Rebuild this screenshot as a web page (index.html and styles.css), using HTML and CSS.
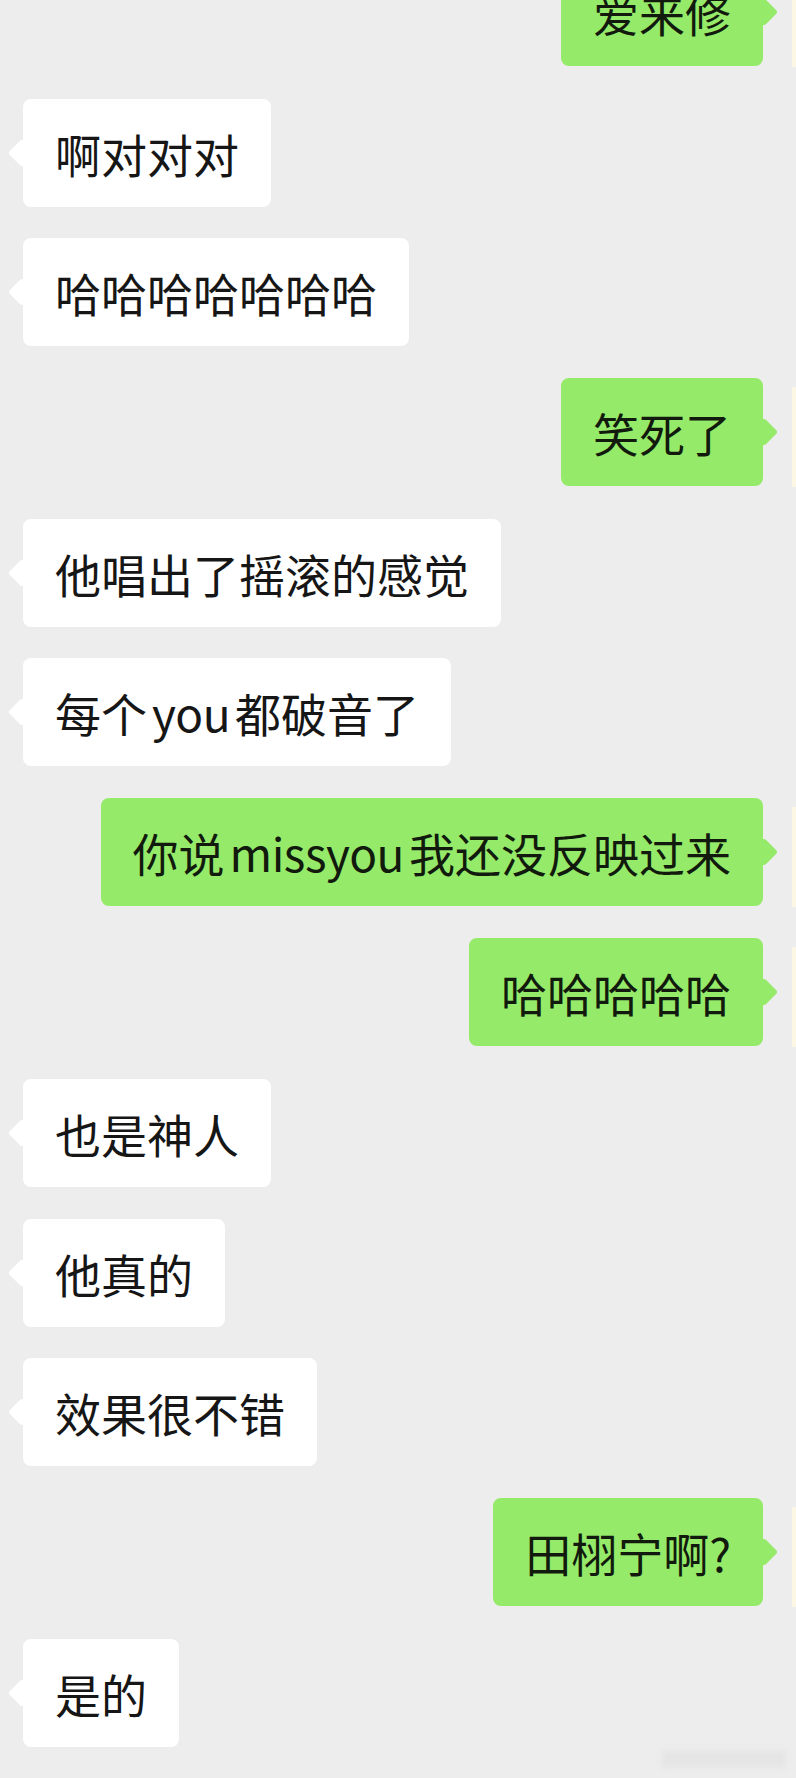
FILE: index.html
```html
<!DOCTYPE html>
<html lang="zh-CN">
<head>
<meta charset="utf-8">
<title>聊天记录</title>
<link rel="stylesheet" href="styles.css">
</head>
<body>
<div class="chat">
  <div class="row me"><div class="bubble">爱来修</div><div class="avatar"></div></div>
  <div class="row other"><div class="bubble">啊对对对</div></div>
  <div class="row other"><div class="bubble">哈哈哈哈哈哈哈</div></div>
  <div class="row me"><div class="bubble">笑死了</div><div class="avatar"></div></div>
  <div class="row other"><div class="bubble">他唱出了摇滚的感觉</div></div>
  <div class="row other"><div class="bubble">每个<span class="latin">you</span>都破音了</div></div>
  <div class="row me"><div class="bubble">你说<span class="latin">missyou</span>我还没反映过来</div><div class="avatar"></div></div>
  <div class="row me"><div class="bubble">哈哈哈哈哈</div><div class="avatar"></div></div>
  <div class="row other"><div class="bubble">也是神人</div></div>
  <div class="row other"><div class="bubble">他真的</div></div>
  <div class="row other"><div class="bubble">效果很不错</div></div>
  <div class="row me"><div class="bubble smudge">田栩宁啊?</div><div class="avatar"></div></div>
  <div class="row other"><div class="bubble">是的</div></div>
</div>
<div class="watermark"></div>
</body>
</html>
```

FILE: styles.css
```css
html, body {
  margin: 0;
  padding: 0;
}
body {
  width: 796px;
  height: 1778px;
  overflow: hidden;
  position: relative;
  background: #ededed;
  font-family: "Noto Sans CJK SC", "Noto Sans", sans-serif;
  color: #161616;
}
.chat {
  display: flex;
  flex-direction: column;
  gap: 31.65px;
  margin-top: -42px;
}
.row {
  display: flex;
  align-items: flex-start;
}
.row.other {
  justify-content: flex-start;
  padding-left: 23px;
}
.row.me {
  justify-content: flex-end;
}
.bubble {
  position: relative;
  box-sizing: border-box;
  height: 108px;
  padding: 22px 32px;
  font-size: 46px;
  line-height: 64px;
  white-space: nowrap;
  border-radius: 8px;
  background: #ffffff;
}
.latin {
  letter-spacing: -0.5px;
  margin: 0 5px;
}
.bubble::before {
  content: "";
  position: absolute;
  top: 50%;
  width: 20px;
  height: 20px;
  margin-top: -10px;
  background: inherit;
  border-radius: 3px;
  transform: rotate(45deg);
}
.other .bubble::before {
  left: -11px;
}
.me .bubble {
  background: #95ea69;
  color: #111a0c;
  margin-right: 29px;
}
.me .bubble::before {
  right: -11px;
}
.avatar {
  width: 4px;
  height: 100px;
  margin-top: 9px;
  background: #fbf7e4;
}
.smudge {
  background-image: radial-gradient(ellipse 90px 22px at 42% 78%, rgba(255,255,255,0.28), rgba(255,255,255,0) 100%);
  background-color: #95ea69;
}
.watermark {
  position: absolute;
  right: 10px;
  bottom: 10px;
  width: 125px;
  height: 18px;
  background: #e2e2e2;
  filter: blur(3px);
  opacity: 0.7;
}
```
